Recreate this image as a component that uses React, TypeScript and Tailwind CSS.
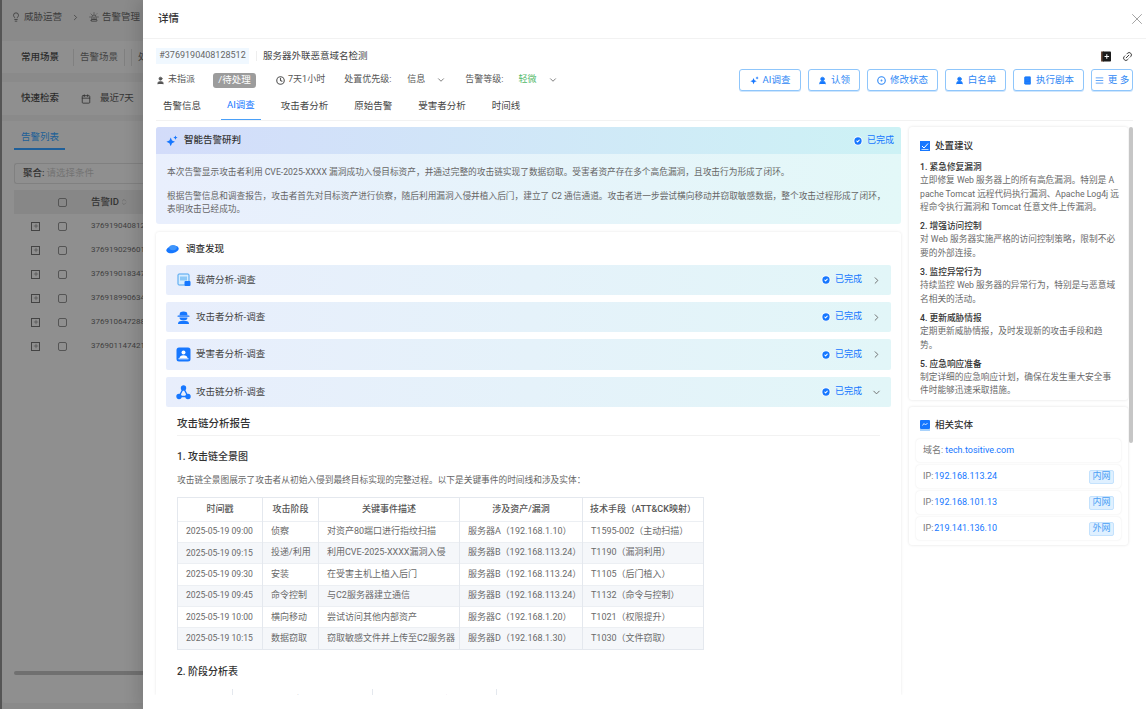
import React from "react";
import { X, ChevronDown, ChevronRight, User, Clock, Link2, CircleCheck, AlignJustify, CircleDot, UserRound, Calendar, Plus, Siren, ChevronsUpDown, BookText, Lightbulb } from "lucide-react";

const bgRows = ["376919040812", "376919029601", "376919018347", "376918990634", "376910647288", "376901147421"];

const tableRows = [
  ["2025-05-19 09:00", "侦察", "对资产80端口进行指纹扫描", "服务器A（192.168.1.10）", "T1595-002（主动扫描）"],
  ["2025-05-19 09:15", "投递/利用", "利用CVE-2025-XXXX漏洞入侵", "服务器B（192.168.113.24）", "T1190（漏洞利用）"],
  ["2025-05-19 09:30", "安装", "在受害主机上植入后门", "服务器B（192.168.113.24）", "T1105（后门植入）"],
  ["2025-05-19 09:45", "命令控制", "与C2服务器建立通信", "服务器B（192.168.113.24）", "T1132（命令与控制）"],
  ["2025-05-19 10:00", "横向移动", "尝试访问其他内部资产", "服务器C（192.168.1.20）", "T1021（权限提升）"],
  ["2025-05-19 10:15", "数据窃取", "窃取敏感文件并上传至C2服务器", "服务器D（192.168.1.30）", "T1030（文件窃取）"],
];

const advice = [
  { title: "1. 紧急修复漏洞", lines: ["立即修复 Web 服务器上的所有高危漏洞。特别是 A", "pache Tomcat 远程代码执行漏洞、Apache Log4j 远", "程命令执行漏洞和 Tomcat 任意文件上传漏洞。"] },
  { title: "2. 增强访问控制", lines: ["对 Web 服务器实施严格的访问控制策略，限制不必", "要的外部连接。"] },
  { title: "3. 监控异常行为", lines: ["持续监控 Web 服务器的异常行为，特别是与恶意域", "名相关的活动。"] },
  { title: "4. 更新威胁情报", lines: ["定期更新威胁情报，及时发现新的攻击手段和趋", "势。"] },
  { title: "5. 应急响应准备", lines: ["制定详细的应急响应计划，确保在发生重大安全事", "件时能够迅速采取措施。"] },
];

const tabs = ["告警信息", "AI调查", "攻击者分析", "原始告警", "受害者分析", "时间线"];

const Done = () => (
  <div className="flex items-center gap-[4px] text-[9px] text-[#1677ff]">
    <CircleCheck size={10} fill="#1677ff" stroke="#fff" strokeWidth={2.5} />
    已完成
  </div>
);

const Stars = ({ size }: { size: number }) => (
  <svg width={size} height={size} viewBox="0 0 14 14" fill="#1677ff">
    <path d="M5.5 3 L7 6.5 L10.5 8 L7 9.5 L5.5 13 L4 9.5 L.5 8 L4 6.5 Z" />
    <path d="M11 .5 L11.8 2.2 L13.5 3 L11.8 3.8 L11 5.5 L10.2 3.8 L8.5 3 L10.2 2.2 Z" />
  </svg>
);

const ActionBtn = ({ w, icon, label }: { w: string; icon: React.ReactNode; label: string }) => (
  <button className={`${w} h-[22px] rounded-[3px] border border-[#8fc6fb] bg-white flex items-center justify-center gap-[4px] text-[9.5px] text-[#2f88f5] shadow-[0_1px_0_#cfe6fd]`}>
    {icon}
    {label}
  </button>
);

const PayloadIcon = () => (
  <svg width="14" height="14" viewBox="0 0 14 14">
    <rect x="1" y="1" width="11" height="11" rx="1" fill="#d6ecff" stroke="#4aa3f0" />
    <rect x="3" y="3.5" width="7" height="4" fill="#8cc8f7" />
    <rect x="7.5" y="8" width="6" height="5" rx="1" fill="#1677ff" />
  </svg>
);

const HackerIcon = () => (
  <svg width="15" height="15" viewBox="0 0 15 15" fill="#1677ff">
    <path d="M4 2.5 Q7.5 .5 11 2.5 L11.5 5.5 H3.5 Z" />
    <rect x="1.5" y="5.5" width="12" height="1.3" rx=".6" />
    <path d="M3.5 7.5 H11.5 Q11.5 10.5 7.5 10.5 Q3.5 10.5 3.5 7.5Z" />
    <path d="M2 14 Q2 11 5 11 H10 Q13 11 13 14Z" />
  </svg>
);

const VictimIcon = () => (
  <svg width="15" height="15" viewBox="0 0 15 15">
    <rect x=".5" y=".5" width="14" height="14" rx="2.5" fill="#1677ff" />
    <circle cx="7.5" cy="5.5" r="2" fill="#fff" />
    <path d="M3.5 11 Q4 8.3 7.5 8.3 Q11 8.3 11.5 11Z" fill="#fff" />
    <rect x="2.5" y="11.3" width="10" height="1" fill="#fff" />
  </svg>
);

const ChainIcon = () => (
  <svg width="15" height="15" viewBox="0 0 15 15" fill="none" stroke="#1677ff" strokeWidth="1.4">
    <path d="M7.5 3 L3 11.5 H12 Z" />
    <circle cx="7.5" cy="3" r="2" fill="#1677ff" />
    <circle cx="3" cy="11.5" r="2" fill="#1677ff" />
    <circle cx="12" cy="11.5" r="2" fill="#1677ff" />
  </svg>
);

const PlanetIcon = () => (
  <svg width="13" height="11" viewBox="0 0 13 11">
    <ellipse cx="6.5" cy="5.5" rx="6.3" ry="3.6" fill="#1677ff" transform="rotate(-12 6.5 5.5)" />
    <ellipse cx="7" cy="3.6" rx="3.8" ry="2.6" fill="#3f95fb" />
  </svg>
);

const AddBookIcon = () => (
  <svg width="10" height="11" viewBox="0 0 10 11">
    <rect x="0" y=".5" width="3" height="10" fill="#6b4a3a" />
    <rect x="1.5" y=".5" width="8.5" height="10" rx=".8" fill="#1b1b1b" />
    <path d="M5.8 3.2 V7.8 M3.5 5.5 H8.1" stroke="#fff" strokeWidth="1" />
  </svg>
);

const findings = [
  { icon: <PayloadIcon />, label: "载荷分析-调查", open: false, h: "h-[30px]" },
  { icon: <HackerIcon />, label: "攻击者分析-调查", open: false, h: "h-[30px]" },
  { icon: <VictimIcon />, label: "受害者分析-调查", open: false, h: "h-[31px]" },
  { icon: <ChainIcon />, label: "攻击链分析-调查", open: true, h: "h-[30px]" },
];

const Background = () => (
  <div className="w-[143px] h-full bg-[#8a8a8a] border-l-2 border-[#555] overflow-hidden text-[9.5px] text-[#333] shrink-0">
    <div className="h-[34px] flex items-center pl-[9px] gap-[3px] text-[#3c3c3c] whitespace-nowrap">
      <Lightbulb size={10} />
      威胁运营
      <ChevronRight size={9} className="mx-[6px]" />
      <Siren size={10} />
      告警管理
    </div>
    <div className="h-[32px] mt-[7px] bg-[#8f8f8f] flex items-center pl-[19px] whitespace-nowrap">
      <span className="font-medium text-[#2b2b2b]">常用场景</span>
      <span className="ml-[14px] h-[17px] px-[6px] border-x border-[#808080] flex items-center text-[#444]">告警场景</span>
      <span className="ml-[6px] h-[17px] pl-[6px] border-l border-[#808080] flex items-center text-[#444]">处置</span>
    </div>
    <div className="h-[33px] mt-[9px] bg-[#8f8f8f] flex items-center pl-[19px] whitespace-nowrap">
      <span className="font-medium text-[#2b2b2b]">快速检索</span>
      <Calendar size={10} className="ml-[22px] shrink-0" />
      <span className="ml-[9px] text-[#333]">最近7天</span>
    </div>
    <div className="mt-[6px] bg-[#8f8f8f] h-[582px] rounded-bl-[4px] pl-[12px]">
      <div className="h-[29px] pt-[9px] w-[51px] border-b-2 border-[#1f5f99] text-[#205f97] text-[9.5px] pl-[7px]">告警列表</div>
      <div className="mt-[13px] h-[21px] border border-[#808080] border-r-0 rounded-l-[3px] flex items-center pl-[8px] whitespace-nowrap">
        <span className="font-medium">聚合:</span>
        <span className="ml-[2px] text-[#737373]">请选择条件</span>
      </div>
      <div className="mt-[6px] h-[24px] bg-[#878787] flex items-center whitespace-nowrap">
        <span className="ml-[44px] w-[9px] h-[9px] shrink-0 border border-[#555] rounded-[2px]" />
        <span className="ml-[24px] font-medium text-[#333]">告警ID</span>
        <ChevronsUpDown size={8} className="ml-[1px] text-[#666] shrink-0" />
      </div>
      {bgRows.map((id) => (
        <div key={id} className="h-[24px] flex items-center whitespace-nowrap text-[8px] text-[#3f3f3f]">
          <span className="ml-[17px] w-[9px] h-[9px] shrink-0 border border-[#444] flex items-center justify-center"><Plus size={6} /></span>
          <span className="ml-[18px] w-[9px] h-[9px] shrink-0 border border-[#555] rounded-[2px]" />
          <span className="ml-[24px]">{id}</span>
        </div>
      ))}
      <div className="mt-[313px] h-[4px] bg-[#707070] rounded-l-full" />
    </div>
  </div>
);

const ReportTable = () => (
  <table className="w-[526px] table-fixed border-collapse border border-[#e4e8ee] text-[9px] text-[#6a6a6a] mt-[10px]">
    <colgroup>
      <col className="w-[85px]" />
      <col className="w-[56px]" />
      <col className="w-[141px]" />
      <col className="w-[123px]" />
      <col className="w-[121px]" />
    </colgroup>
    <thead>
      <tr className="h-[23.5px] text-[#555] text-center">
        {["时间戳", "攻击阶段", "关键事件描述", "涉及资产/漏洞", "技术手段（ATT&CK映射）"].map((h) => (
          <th key={h} className="border-x border-[#e4e8ee] font-medium whitespace-nowrap">{h}</th>
        ))}
      </tr>
    </thead>
    <tbody>
      {tableRows.map((row, i) => (
        <tr key={row[0]} className={`h-[21.4px] border-t border-[#eceff3] ${i % 2 === 1 ? "bg-[#f5f7fa]" : "bg-white"}`}>
          {row.map((cell, j) => (
            <td key={j} className={`border-x border-[#e4e8ee] whitespace-nowrap pl-[8px] ${j === 0 ? "text-[8.6px]" : ""}`}>{cell}</td>
          ))}
        </tr>
      ))}
    </tbody>
  </table>
);

export default function App() {
  return (
    <div className="relative h-[709px] w-[1146px] overflow-hidden bg-[#8a8a8a] flex text-[#333]" style={{ fontFamily: '"Roboto", "Noto Sans CJK SC", sans-serif' }}>
      <Background />

      {/* 详情抽屉 */}
      <div className="absolute left-[143px] top-0 w-[1003px] h-[709px] bg-white flex flex-col shadow-[-6px_0_14px_rgba(0,0,0,0.12)]">
        <div className="h-[39px] shrink-0 border-b border-[#f2f2f2] flex items-center justify-between pl-[15px]">
          <span className="text-[10.5px] font-medium text-[#333]">详情</span>
          <X size={18} strokeWidth={0.9} className="text-[#777]" />
        </div>

        <div className="px-[13px]">
          <div className="h-[30px] flex items-start pt-[9px]">
            <span className="w-[93px] h-[16px] bg-[#f0f8ff] flex items-center justify-center text-[9px] text-[#666]">#3769190408128512</span>
            <span className="ml-[7px] mt-[3px] h-[10px] border-l border-[#eee]" />
            <span className="ml-[6px] text-[9.5px] leading-[16px] text-[#444]">服务器外联恶意域名检测</span>
            <div className="ml-auto flex items-center gap-[11px] h-[16px]">
              <AddBookIcon />
              <Link2 size={11} className="text-[#333] -rotate-45" />
            </div>
          </div>

          <div className="h-[22px] flex items-center text-[9px] text-[#555] whitespace-nowrap">
            <User size={9} fill="#555" className="text-[#555]" />
            <span className="ml-[3px]">未指派</span>
            <span className="ml-[18px] w-[43px] h-[15px] rounded-[3px] bg-[#9c9c9c] text-white text-[9.5px] flex items-center justify-center">/待处理</span>
            <Clock size={9} strokeWidth={3} className="ml-[20px] text-[#555]" />
            <span className="ml-[3px]">7天1小时</span>
            <span className="ml-[19px]">处置优先级:</span>
            <span className="ml-[16px]">信息</span>
            <ChevronDown size={10} className="ml-[11px] text-[#666]" />
            <span className="ml-[19px]">告警等级:</span>
            <span className="ml-[15px] text-[#52b96a]">轻微</span>
            <ChevronDown size={10} className="ml-[11px] text-[#666]" />
            <div className="ml-auto flex items-center gap-[7px]">
              <ActionBtn w="w-[62px]" icon={<Stars size={9} />} label="AI调查" />
              <ActionBtn w="w-[52px]" icon={<UserRound size={9} fill="#1677ff" />} label="认领" />
              <ActionBtn w="w-[71px]" icon={<CircleDot size={9} strokeWidth={3} />} label="修改状态" />
              <ActionBtn w="w-[61px]" icon={<UserRound size={9} fill="#1677ff" />} label="白名单" />
              <ActionBtn w="w-[71px]" icon={<BookText size={9} fill="#1677ff" />} label="执行剧本" />
              <ActionBtn w="w-[42px]" icon={<AlignJustify size={9} />} label="更 多" />
            </div>
          </div>

          <div className="h-[30px] flex items-end border-b border-[#f2f2f2] pl-[1px]">
            {tabs.map((t) => (
              <div key={t} className={`h-[28px] px-[6px] mr-[14px] flex items-center text-[9.5px] whitespace-nowrap ${t === "AI调查" ? "text-[#1677ff] border-b-[1.5px] border-[#4aa0f8]" : "text-[#444]"}`}>
                {t}
              </div>
            ))}
          </div>
        </div>

        <div className="flex-1 min-h-0 overflow-hidden pl-[13px] pt-[6px] mb-[14px] flex gap-[8px] relative">
          <div className="w-[745px] shrink-0 flex flex-col gap-[8px]">
            {/* 研判摘要 */}
            <div className="h-[97px] shrink-0 rounded-[3px] overflow-hidden bg-gradient-to-r from-[#e9effd] to-[#e3f8f8]">
              <div className="h-[27px] flex items-center pl-[10px] pr-[7px] bg-gradient-to-r from-[#d3dcfa] to-[#cdf2f5]">
                <Stars size={12} />
                <span className="ml-[6px] text-[9.5px] font-medium text-[#333]">智能告警研判</span>
                <div className="ml-auto"><Done /></div>
              </div>
              <div className="pl-[11px] pt-[12px] text-[8.7px] leading-[13.5px] text-[#666]">
                <p>本次告警显示攻击者利用 CVE-2025-XXXX 漏洞成功入侵目标资产，并通过完整的攻击链实现了数据窃取。受害者资产存在多个高危漏洞，且攻击行为形成了闭环。</p>
                <p className="mt-[10px] w-[722px]">根据告警信息和调查报告，攻击者首先对目标资产进行侦察，随后利用漏洞入侵并植入后门，建立了 C2 通信通道。攻击者进一步尝试横向移动并窃取敏感数据，整个攻击过程形成了闭环，表明攻击已经成功。</p>
              </div>
            </div>

            {/* 调查发现 */}
            <div className="flex-1 bg-white rounded-t-[3px] shadow-[0_0_3px_rgba(0,0,0,0.1)] px-[10px] overflow-hidden">
              <div className="h-[33px] flex items-center pt-[1px]">
                <PlanetIcon />
                <span className="ml-[7px] text-[9.5px] font-medium text-[#333]">调查发现</span>
              </div>
              <div className="flex flex-col gap-[7px]">
                {findings.map((f) => (
                  <div key={f.label} className={`${f.h} rounded-[2px] bg-gradient-to-r from-[#e8eefc] to-[#e2f6f8] flex items-center pl-[10px] pr-[9px]`}>
                    <span className="w-[15px] flex justify-center">{f.icon}</span>
                    <span className="ml-[5px] text-[9.5px] text-[#444]">{f.label}</span>
                    <div className="ml-auto flex items-center gap-[9px]">
                      <Done />
                      {f.open ? <ChevronDown size={11} className="text-[#666]" /> : <ChevronRight size={11} className="text-[#666]" />}
                    </div>
                  </div>
                ))}
              </div>
              <div className="px-[11px]">
                <div className="h-[29px] border-b border-[#f2f2f2] flex items-end pb-[3px] text-[10.5px] font-medium text-[#333]">攻击链分析报告</div>
                <div className="mt-[14px] text-[10px] font-medium text-[#333] leading-[14px]">1. 攻击链全景图</div>
                <p className="mt-[10px] text-[8.7px] leading-[13px] text-[#666]">攻击链全景图展示了攻击者从初始入侵到最终目标实现的完整过程。以下是关键事件的时间线和涉及实体：</p>
                <ReportTable />
                <div className="mt-[15px] text-[10px] font-medium text-[#333] leading-[14px]">2. 阶段分析表</div>
                <div className="mt-[10px] h-[20px] w-[700px] flex text-[9px] text-[#555] text-center">
                  <span className="w-[56px] border-r border-[#e4e8ee] pt-[5px]">攻击阶段</span>
                  <span className="w-[140px] border-r border-[#e4e8ee] pt-[5px]">关键事件描述</span>
                  <span className="w-[124px] border-r border-[#e4e8ee] pt-[5px]">涉及资产/漏洞</span>
                  <span className="w-[90px] pt-[5px]">攻击阶段</span>
                  <span className="w-[100px] pt-[5px]">技术手段</span>
                </div>
              </div>
            </div>
          </div>

          {/* 右侧 */}
          <div className="w-[219px] shrink-0 flex flex-col gap-[7px]">
            <div className="h-[273px] shrink-0 rounded-[3px] bg-white shadow-[0_0_3px_rgba(0,0,0,0.12)] px-[11px] pt-[12px]">
              <div className="flex items-center h-[14px]">
                <svg width="10" height="10" viewBox="0 0 10 10">
                  <rect width="10" height="10" fill="#1677ff" />
                  <path d="M2 5 L4 7 L8 2.5" stroke="#fff" fill="none" />
                  <rect x="1.5" y="8" width="7" height=".7" fill="#fff" />
                </svg>
                <span className="ml-[5px] text-[9.5px] font-medium text-[#333]">处置建议</span>
              </div>
              <div className="mt-[8px] flex flex-col gap-[6px]">
                {advice.map((a) => (
                  <div key={a.title} className="text-[8.7px] leading-[13.3px] whitespace-nowrap">
                    <div className="font-medium text-[#333]">{a.title}</div>
                    {a.lines.map((l) => (
                      <div key={l} className="text-[#6a6a6a]">{l}</div>
                    ))}
                  </div>
                ))}
              </div>
            </div>

            <div className="h-[138px] shrink-0 rounded-[3px] bg-white shadow-[0_0_3px_rgba(0,0,0,0.12)] px-[7px] pt-[11px]">
              <div className="flex items-center h-[14px] pl-[4px]">
                <svg width="10" height="11" viewBox="0 0 10 11">
                  <rect width="10" height="9" rx="1" fill="#1677ff" />
                  <rect y="9" width="10" height="2" fill="#a9d2fb" />
                  <path d="M2.5 5.5 L4 3.5 L5.5 5 L7.5 3" stroke="#fff" fill="none" strokeWidth=".8" />
                </svg>
                <span className="ml-[5px] text-[9.5px] font-medium text-[#333]">相关实体</span>
              </div>
              <div className="mt-[7px] flex flex-col gap-[3px]">
                <div className="h-[23px] rounded-[4px] shadow-[0_0_2px_rgba(0,0,0,0.1)] flex items-center px-[7px] text-[9px] text-[#777]">
                  域名:<span className="ml-[2px] text-[#1677ff]">tech.tositive.com</span>
                </div>
                {[["192.168.113.24", "内网"], ["192.168.101.13", "内网"], ["219.141.136.10", "外网"]].map(([ip, tag]) => (
                  <div key={ip} className="h-[23px] rounded-[4px] shadow-[0_0_2px_rgba(0,0,0,0.1)] flex items-center pl-[7px] pr-[7px] text-[9px] text-[#777]">
                    IP:<span className="ml-[1px] text-[#1677ff]">{ip}</span>
                    <span className="ml-auto w-[25px] h-[14px] rounded-[2px] bg-[#dff0ff] border border-[#c4e2fd] flex items-center justify-center text-[#4b9ff5]">{tag}</span>
                  </div>
                ))}
              </div>
            </div>
          </div>

          {/* 滚动条 */}
          <div className="absolute left-[986px] top-[6px] w-[4px] h-[316px] rounded-[2px] bg-[#c6c6c6]" />
        </div>
      </div>
    </div>
  );
}
